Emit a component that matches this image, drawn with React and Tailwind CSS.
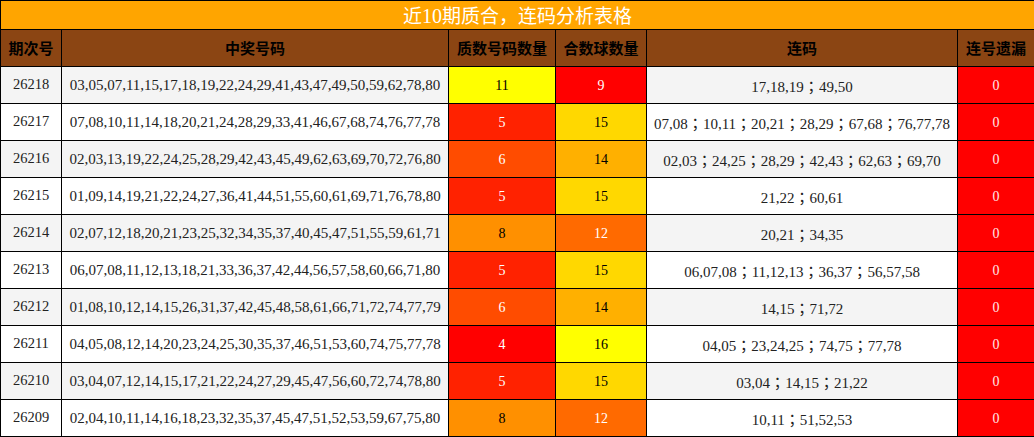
const rows = [
  { no: '26218', nums: '03,05,07,11,15,17,18,19,22,24,29,41,43,47,49,50,59,62,78,80', p: 11, c: 9, lian: '17,18,19；49,50' },
  { no: '26217', nums: '07,08,10,11,14,18,20,21,24,28,29,33,41,46,67,68,74,76,77,78', p: 5, c: 15, lian: '07,08；10,11；20,21；28,29；67,68；76,77,78' },
  { no: '26216', nums: '02,03,13,19,22,24,25,28,29,42,43,45,49,62,63,69,70,72,76,80', p: 6, c: 14, lian: '02,03；24,25；28,29；42,43；62,63；69,70' },
  { no: '26215', nums: '01,09,14,19,21,22,24,27,36,41,44,51,55,60,61,69,71,76,78,80', p: 5, c: 15, lian: '21,22；60,61' },
  { no: '26214', nums: '02,07,12,18,20,21,23,25,32,34,35,37,40,45,47,51,55,59,61,71', p: 8, c: 12, lian: '20,21；34,35' },
  { no: '26213', nums: '06,07,08,11,12,13,18,21,33,36,37,42,44,56,57,58,60,66,71,80', p: 5, c: 15, lian: '06,07,08；11,12,13；36,37；56,57,58' },
  { no: '26212', nums: '01,08,10,12,14,15,26,31,37,42,45,48,58,61,66,71,72,74,77,79', p: 6, c: 14, lian: '14,15；71,72' },
  { no: '26211', nums: '04,05,08,12,14,20,23,24,25,30,35,37,46,51,53,60,74,75,77,78', p: 4, c: 16, lian: '04,05；23,24,25；74,75；77,78' },
  { no: '26210', nums: '03,04,07,12,14,15,17,21,22,24,27,29,45,47,56,60,72,74,78,80', p: 5, c: 15, lian: '03,04；14,15；21,22' },
  { no: '26209', nums: '02,04,10,11,14,16,18,23,32,35,37,45,47,51,52,53,59,67,75,80', p: 8, c: 12, lian: '10,11；51,52,53' },
]

// colour scale used for both count columns
const tone = {
  4: 'bg-[#ff0000] text-white',
  5: 'bg-[#ff2200] text-white',
  6: 'bg-[#ff4c00] text-white',
  8: 'bg-[#ff9000] text-black',
  9: 'bg-[#ff0000] text-white',
  11: 'bg-[#ffff00] text-black',
  12: 'bg-[#ff6a00] text-white',
  14: 'bg-[#ffb000] text-black',
  15: 'bg-[#ffd800] text-black',
  16: 'bg-[#ffff00] text-black',
}

function Lian({ text }) {
  const parts = text.split('；')
  return parts.map((p, i) => (
    <span key={i}>
      {p}
      {i < parts.length - 1 && <span className="font-['Noto_Sans_CJK_TC',sans-serif]">；</span>}
    </span>
  ))
}

export default function App() {
  const th = 'border border-black font-bold text-[15px] text-black'
  const td = 'border border-black text-center'
  return (
    <div className="w-[1034px] h-[437px] bg-white overflow-hidden font-['Liberation_Serif',serif]">
      <table className="w-[1034px] table-fixed border-collapse">
        <colgroup>
          <col className="w-[61px]" />
          <col className="w-[387px]" />
          <col className="w-[107px]" />
          <col className="w-[91px]" />
          <col className="w-[311px]" />
          <col className="w-[77px]" />
        </colgroup>
        <thead>
          <tr className="h-[29px]">
            <th colSpan={6} className="border border-black bg-[#ffa500] text-white font-normal text-[19px] leading-none font-['Noto_Sans_CJK_SC',sans-serif]">
              近<span className="font-['Liberation_Serif',serif] text-[20px]">10</span>期质合，连码分析表格
            </th>
          </tr>
          <tr className="h-[37px] bg-[#8b4513] font-['Noto_Sans_CJK_SC',sans-serif]">
            <th className={th}>期次号</th>
            <th className={th}>中奖号码</th>
            <th className={th}>质数号码数量</th>
            <th className={th}>合数球数量</th>
            <th className={th}>连码</th>
            <th className={th}>连号遗漏</th>
          </tr>
        </thead>
        <tbody className="text-[14px] text-[#222]">
          {rows.map((r, i) => (
            <tr key={r.no} className={`h-[37px] ${i % 2 === 0 ? 'bg-[#f4f4f4]' : 'bg-white'}`}>
              <td className={`${td} text-[14.5px]`}>{r.no}</td>
              <td className={`${td} text-[15px]`}>{r.nums}</td>
              <td className={`${td} ${tone[r.p]}`}>{r.p}</td>
              <td className={`${td} ${tone[r.c]}`}>{r.c}</td>
              <td className={`${td} text-[15px] pt-[4px]`}><Lian text={r.lian} /></td>
              <td className={`${td} bg-[#ff0000] text-[#ffe8e8]`}>0</td>
            </tr>
          ))}
        </tbody>
      </table>
    </div>
  )
}
